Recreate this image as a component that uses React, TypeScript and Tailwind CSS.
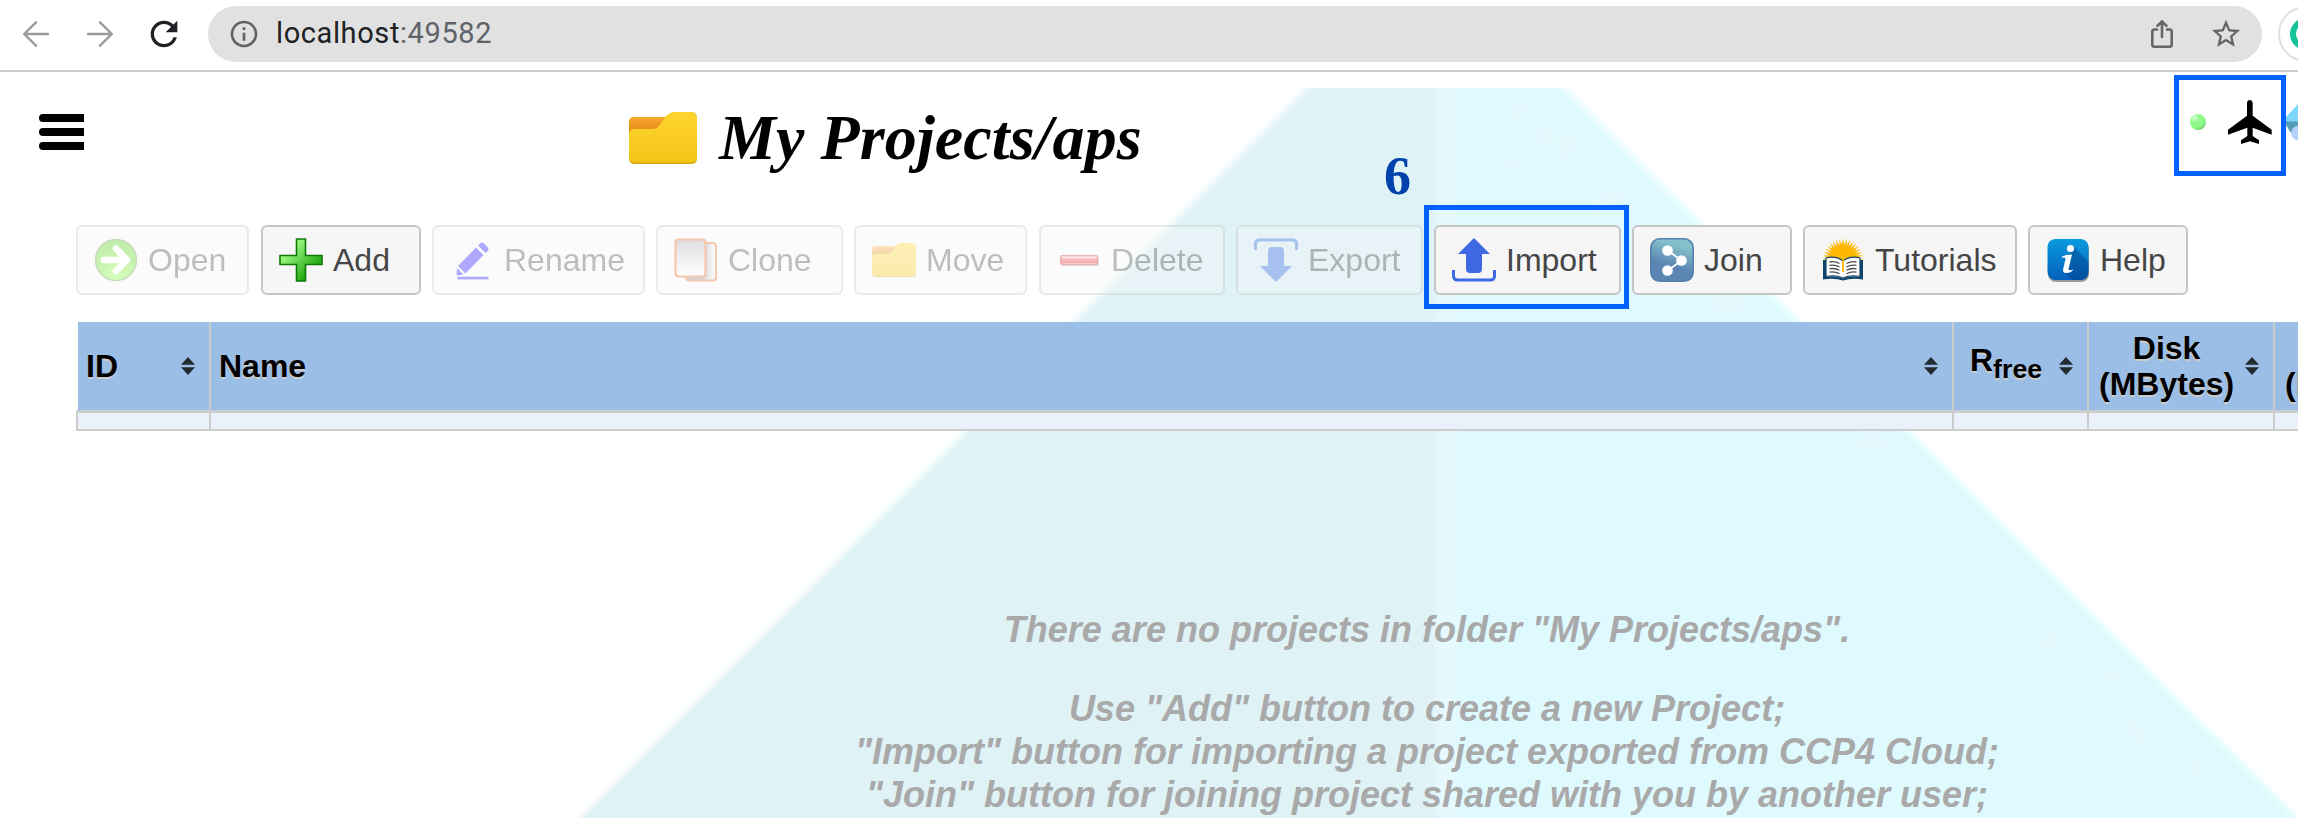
import type { ReactNode } from "react";
import { MdInfoOutline, MdRefresh, MdStarBorder } from "react-icons/md";

const FolderIcon = ({ className }: { className: string }) => (
  <svg viewBox="0 0 68 52" preserveAspectRatio="none" className={className}>
    <defs>
      <linearGradient id="folderFront" x1="0" y1="0" x2="0" y2="1">
        <stop offset="0" stopColor="#ffd42f" />
        <stop offset="1" stopColor="#f2c618" />
      </linearGradient>
      <linearGradient id="folderBack" x1="0" y1="0" x2="0" y2="1">
        <stop offset="0" stopColor="#f9a92c" />
        <stop offset="0.4" stopColor="#e8931c" />
      </linearGradient>
    </defs>
    <path d="M0 10Q0 5 5 5H45V30H0Z" fill="url(#folderBack)" />
    <path d="M0 23Q0 17 5 17H24C34 17 33 0 47 0H62Q68 0 68 6V46Q68 52 62 52H6Q0 52 0 46Z" fill="#d3a90f" />
    <path d="M0 23Q0 17 5 17H24C34 17 33 0 47 0H62Q68 0 68 6V45Q68 50.5 62 50.5H6Q0 50.5 0 45Z" fill="url(#folderFront)" />
  </svg>
);

const Icon = ({ children }: { children: ReactNode }) => (
  <svg viewBox="0 0 44 44" className="h-11 w-11 shrink-0">
    {children}
  </svg>
);

const OpenIcon = () => (
  <Icon>
    <defs>
      <radialGradient id="openFill" cx="0.5" cy="0.9" r="0.9">
        <stop offset="0" stopColor="#8cff3c" />
        <stop offset="1" stopColor="#4cc40c" />
      </radialGradient>
    </defs>
    <circle cx="22" cy="22" r="20.5" fill="url(#openFill)" stroke="#5f9a4a" strokeWidth="1.5" />
    <path d="M10 22H32M22 10.500L33 22L22 33" fill="none" stroke="#fff" strokeWidth="6.500" strokeLinecap="round" strokeLinejoin="round" />
  </Icon>
);

const AddIcon = () => (
  <Icon>
    <defs>
      <linearGradient id="addFill" x1="0" y1="0" x2="1" y2="1">
        <stop offset="0.2" stopColor="#a4ff8c" />
        <stop offset="0.8" stopColor="#1ba30a" />
      </linearGradient>
    </defs>
    <path d="M17.500 1H26.500V17.500H43V26.500H26.500V43H17.500V26.500H1V17.500H17.500Z" fill="url(#addFill)" stroke="#0c7a05" strokeWidth="1.600" />
  </Icon>
);

const RenameIcon = () => (
  <Icon>
    <g fill="#1d08ff">
      <path d="M8 28L26 9.500L33.500 17L15.500 35.500Z" />
      <path d="M28 7.500L30.500 5Q32 4 33.500 5L38 9.500Q39 11 38 12.500L35.500 15Z" />
      <path d="M7 30L13.500 36.500L7.500 37.500Q6.500 37.500 6.600 36Z" />
      <rect x="7.500" y="38.700" width="31" height="2.700" />
    </g>
  </Icon>
);

const CloneIcon = () => (
  <Icon>
    <defs>
      <linearGradient id="cloneFill" x1="0" y1="0" x2="0" y2="1">
        <stop offset="0" stopColor="#a8a0ac" />
        <stop offset="1" stopColor="#ffffff" />
      </linearGradient>
      <linearGradient id="cloneShade" x1="0" y1="0" x2="1" y2="0">
        <stop offset="0.55" stopColor="#8d8790" />
        <stop offset="1" stopColor="#ffffff" />
      </linearGradient>
    </defs>
    <rect x="12" y="5" width="30" height="37.500" rx="3" fill="url(#cloneShade)" stroke="#e8601c" strokeWidth="2" />
    <rect x="1.500" y="1.500" width="30" height="37" rx="3" fill="url(#cloneFill)" stroke="#e8601c" strokeWidth="2.200" />
  </Icon>
);

const MoveIcon = () => (
  <span className="flex h-11 w-11 shrink-0 items-center">
    <FolderIcon className="h-[34px] w-11" />
  </span>
);

const DeleteIcon = () => (
  <Icon>
    <defs>
      <linearGradient id="deleteFill" x1="0" y1="0" x2="0" y2="1">
        <stop offset="0" stopColor="#ff8f8f" />
        <stop offset="0.5" stopColor="#e83838" />
        <stop offset="1" stopColor="#d80000" />
      </linearGradient>
    </defs>
    <rect x="4" y="19" width="38" height="9" rx="1" fill="#999" />
    <rect x="3.500" y="17.500" width="37" height="9" rx="1" fill="url(#deleteFill)" stroke="#c23030" strokeWidth="1" />
    <path d="M5 19.500H39" stroke="#ffc4c4" strokeWidth="1.500" />
    <path d="M5 25.500H39" stroke="#ff6b6b" strokeWidth="1" />
  </Icon>
);

const TransferShape = () => (
  <g>
    <path d="M22 0L38 16H30V31Q30 35 26 35H18Q14 35 14 31V16H6Z" fill="#3f68e4" />
    <path d="M1.500 32V38Q1.500 42 6 42H38Q42.500 42 42.500 38V32" fill="none" stroke="#3f68e4" strokeWidth="3" />
  </g>
);

const ExportIcon = () => (
  <Icon>
    <g transform="rotate(180 22 22)">
      <TransferShape />
    </g>
  </Icon>
);

const ImportIcon = () => (
  <Icon>
    <TransferShape />
  </Icon>
);

const JoinIcon = () => (
  <Icon>
    <defs>
      <linearGradient id="joinFill" x1="0.7" y1="0" x2="0.4" y2="1">
        <stop offset="0.15" stopColor="#84c1cb" />
        <stop offset="0.65" stopColor="#5b86b3" />
      </linearGradient>
    </defs>
    <rect x="0.800" y="0.800" width="42.400" height="42.400" rx="9" fill="url(#joinFill)" stroke="#5580ae" strokeWidth="1.600" />
    <path d="M18 12.500L31.500 22.500L18 32.500" fill="none" stroke="#fff" strokeWidth="1.800" />
    <circle cx="17.500" cy="12.500" r="5.300" fill="#fff" />
    <circle cx="31.500" cy="22.500" r="5.300" fill="#fff" />
    <circle cx="17.500" cy="32.500" r="5.300" fill="#fff" />
  </Icon>
);

const rays = Array.from({ length: 21 }, (_, i) => {
  const a = (-190 + i * 10) * (Math.PI / 180);
  const p = (r: number, d: number) => `${22 + r * Math.cos(a + d)},${21 + r * Math.sin(a + d)}`;
  return `${p(14, -0.09)} ${p(20.5, 0)} ${p(14, 0.09)}`;
});

const TutorialsIcon = () => (
  <Icon>
    <circle cx="22" cy="21" r="14.500" fill="#fdb802" />
    {rays.map((r) => (
      <polygon key={r} points={r} fill="#fdb802" />
    ))}
    <path d="M2 22H5V39Q14 37 22 40.500Q30 37 39 39V22H42V41.500Q31 39.500 22 42.500Q13 39.500 2 41.500Z" fill="#12456c" />
    <path d="M5 20Q15 17.500 22 23Q29 17.500 39 20V38.500Q29 36.500 22 40Q15 36.500 5 38.500Z" fill="#fff" stroke="#12456c" strokeWidth="1.200" />
    <path d="M8.500 24Q14 23 18.500 25.500M8.500 27.400Q14 26.400 18.500 29M8.500 30.800Q14 29.800 18.500 32.300M8.500 34.200Q14 33.200 18.500 35.700M35.500 24Q30 23 25.500 25.500M35.500 27.400Q30 26.400 25.500 29M35.500 30.800Q30 29.800 25.500 32.300M35.500 34.200Q30 33.200 25.500 35.700" fill="none" stroke="#4b4b4b" strokeWidth="1.300" />
    <path d="M22 22V34" stroke="#fdb802" strokeWidth="1.800" />
  </Icon>
);

const HelpIcon = () => (
  <Icon>
    <defs>
      <linearGradient id="helpFill" x1="0" y1="0" x2="0" y2="1">
        <stop offset="0" stopColor="#0a9ade" />
        <stop offset="1" stopColor="#0560bd" />
      </linearGradient>
    </defs>
    <rect x="2" y="3" width="41" height="41" rx="8" fill="#9a9a9a" />
    <rect x="1.500" y="1" width="41" height="41" rx="8" fill="url(#helpFill)" />
    <path d="M27 8L42.500 24V34Q42.500 42 34.500 42H26L19 35L25 14Z" fill="#053f86" fillOpacity="0.450" />
    <circle cx="24.500" cy="10.500" r="3.600" fill="#fff" />
    <path d="M16 18.500Q20 16.500 26 16.500L22.500 31Q22.500 33 27.500 31.500Q25 35 20 35Q16.500 35 17.200 31L19.600 20.500Q19 19 16 19.800Z" fill="#fff" />
  </Icon>
);

type Tool = { label: string; icon: ReactNode; width: string; disabled?: boolean };

const tools: Tool[] = [
  { label: "Open", icon: <OpenIcon />, width: "w-[173px]", disabled: true },
  { label: "Add", icon: <AddIcon />, width: "w-40 ml-px", disabled: false },
  { label: "Rename", icon: <RenameIcon />, width: "w-[213px]", disabled: true },
  { label: "Clone", icon: <CloneIcon />, width: "w-[187px]", disabled: true },
  { label: "Move", icon: <MoveIcon />, width: "w-[173px]", disabled: true },
  { label: "Delete", icon: <DeleteIcon />, width: "w-[186px] ml-px", disabled: true },
  { label: "Export", icon: <ExportIcon />, width: "w-[187px]", disabled: true },
  { label: "Import", icon: <ImportIcon />, width: "w-[187px]" },
  { label: "Join", icon: <JoinIcon />, width: "w-40" },
  { label: "Tutorials", icon: <TutorialsIcon />, width: "w-[214px]" },
  { label: "Help", icon: <HelpIcon />, width: "w-40" },
];

const ToolButton = ({ label, icon, width, disabled }: Tool) => (
  <button
    className={`flex h-[70px] shrink-0 items-center gap-[10px] rounded-md border-2 border-[#c5c5c5] bg-[#f6f6f6] pl-4 text-[32px] leading-none text-[#454545] ${width} ${disabled ? "opacity-35" : ""}`}
  >
    {icon}
    <span className="pb-px">{label}</span>
  </button>
);

const SortIcon = () => (
  <svg viewBox="0 0 14 18" className="h-[18px] w-[14px] shrink-0" fill="#222b30">
    <path d="M7 0L14 7.700H0ZM7 18L14 10.300H0Z" />
  </svg>
);

const Pyramid = () => (
  <svg viewBox="0 0 2298 730" className="absolute left-0 top-4 h-[730px] w-[2298px]">
    <defs>
      <filter id="soft" x="-5%" y="-5%" width="110%" height="110%">
        <feGaussianBlur stdDeviation="3" />
      </filter>
      <clipPath id="frame">
        <rect width="2298" height="730" />
      </clipPath>
    </defs>
    <g clipPath="url(#frame)">
      <g filter="url(#soft)">
        <path d="M1327 -20H1440V760H551Z" fill="#dff2f6" />
        <path d="M1440 -20H1545L2328 760H1440Z" fill="#dffaff" />
        <path d="M1436 -20H1456V760H1436Z" fill="#e6f9ff" />
        <g fill="#e5f9ff">
          <ellipse cx="1518" cy="24" rx="13" ry="6" transform="rotate(-45 1518 24)" />
          <ellipse cx="1546" cy="48" rx="12" ry="7" />
          <ellipse cx="1566" cy="58" rx="9" ry="13" transform="rotate(30 1566 58)" />
          <ellipse cx="1513" cy="77" rx="9" ry="6" />
          <ellipse cx="1608" cy="112" rx="18" ry="8" transform="rotate(-35 1608 112)" />
          <ellipse cx="1728" cy="214" rx="22" ry="9" />
          <ellipse cx="1870" cy="354" rx="18" ry="8" />
          <ellipse cx="2050" cy="552" rx="8" ry="14" transform="rotate(30 2050 552)" />
          <ellipse cx="2112" cy="588" rx="12" ry="8" />
          <ellipse cx="2138" cy="645" rx="7" ry="18" transform="rotate(-30 2138 645)" />
          <ellipse cx="2196" cy="680" rx="7" ry="15" transform="rotate(-30 2196 680)" />
        </g>
      </g>
    </g>
  </svg>
);

export default function App() {
  return (
    <div className="relative flex h-[818px] w-[2298px] flex-col overflow-hidden bg-white font-['Liberation_Sans',Arial,sans-serif]">
      <header className="flex h-[72px] shrink-0 items-start border-b-2 border-[#cbcbcb] bg-white pt-[6px]">
        <div className="flex h-14 w-[208px] shrink-0 items-center">
          <svg viewBox="0 0 26 26" className="ml-[23px] h-[26px] w-[26px]" fill="none" stroke="#9b9b9b" strokeWidth="2.400" strokeLinecap="round">
            <path d="M25 13H1.500M13 1.300L1.300 13L13 24.700" />
          </svg>
          <svg viewBox="0 0 26 26" className="ml-[38px] h-[26px] w-[26px]" fill="none" stroke="#9b9b9b" strokeWidth="2.400" strokeLinecap="round">
            <path d="M1 13H24.500M13 1.300L24.700 13L13 24.700" />
          </svg>
          <MdRefresh className="ml-[31px] h-[40px] w-[40px] text-[#202124]" />
        </div>
        <div className="flex h-14 w-[2054px] shrink-0 items-center rounded-full bg-[#e1e1e1] pl-5">
          <MdInfoOutline className="h-8 w-8 text-[#5f6368]" />
          <span className="ml-4 font-['Roboto',sans-serif] text-[29px] tracking-[0.6px] text-[#202124]">
            localhost<span className="text-[#5f6368]">:49582</span>
          </span>
          <svg viewBox="0 0 22 28" className="ml-auto h-7 w-[22px]" fill="none" stroke="#636568" strokeWidth="2.600" strokeLinecap="round" strokeLinejoin="round">
            <path d="M6 9.500H3.500Q1.300 9.500 1.300 11.700V24.500Q1.300 26.700 3.500 26.700H18.500Q20.700 26.700 20.700 24.500V11.700Q20.700 9.500 18.500 9.500H16M11 17V1.500M6.500 5.800L11 1.300L15.500 5.800" />
          </svg>
          <MdStarBorder className="ml-[36px] mr-[19px] h-[34px] w-[34px] text-[#636568]" />
        </div>
        <svg viewBox="0 0 20 56" className="ml-4 h-14 w-5 shrink-0">
          <circle cx="28" cy="28" r="27" fill="#fff" stroke="#dfdfdf" strokeWidth="2" />
          <circle cx="28" cy="28" r="16" fill="#15c39a" />
          <circle cx="28" cy="28" r="8.500" fill="none" stroke="#fff" strokeWidth="3" />
        </svg>
      </header>

      <main className="relative flex h-[746px] flex-col">
        <Pyramid />
        <div className="relative flex h-[153px] shrink-0 items-start">
          <svg viewBox="0 0 45 36" className="ml-[39px] mt-[42px] h-9 w-[45px]">
            <path d="M4 0H45V8H4A4 4 0 0 1 4 0ZM4 14H45V22H4A4 4 0 0 1 4 14ZM4 28H45V36H4A4 4 0 0 1 4 28Z" fill="#000" />
          </svg>
          <FolderIcon className="ml-[545px] mt-10 h-[52px] w-[68px]" />
          <h1 className="ml-[22px] mt-[30px] whitespace-nowrap font-['Liberation_Serif','Times_New_Roman',serif] text-[64px] font-bold italic leading-[72px] tracking-[0.1px] text-black">
            My Projects/aps
          </h1>
          <div className="ml-auto mt-[3px] flex h-[101px] w-[124px] shrink-0">
            <div className="flex h-[101px] w-28 items-start border-[5px] border-[#0061ff] bg-white pt-5 pl-[11px]">
              <svg viewBox="0 0 16 16" className="mt-[14px] h-4 w-4">
                <defs>
                  <radialGradient id="dot" cx="0.3" cy="0.25" r="0.8">
                    <stop offset="0" stopColor="#e0ffd8" />
                    <stop offset="0.35" stopColor="#90fb8c" />
                    <stop offset="0.8" stopColor="#8cf884" />
                    <stop offset="1" stopColor="#74c870" />
                  </radialGradient>
                </defs>
                <circle cx="8" cy="8" r="8" fill="url(#dot)" />
              </svg>
              <svg viewBox="564 300 132 132" className="ml-[22px] h-11 w-11" fill="#000">
                <path d="M621 308Q622 300 630 300Q637 300 638 308V347L695 389V404L638 383V408L657 421V432L630 424L603 432V421L622 408V383L564 404V389L621 347Z" />
              </svg>
            </div>
            <svg viewBox="0 0 12 44" className="mt-[24px] h-11 w-3">
              <path d="M0 18L12 5V23H0Z" fill="#7fd8fb" />
              <path d="M0 22.500H12V34H5L0 26Z" fill="#559db5" />
              <circle cx="12.500" cy="34" r="7.300" fill="#b4d2fb" />
            </svg>
          </div>
        </div>

        <div className="relative flex h-[97px] shrink-0 items-start gap-[11px] pl-[76px]">
          {tools.map((t) => (
            <ToolButton key={t.label} {...t} />
          ))}
        </div>

        <div className="relative ml-[76px] w-[2322px] shrink-0 text-[32px] font-bold text-black">
          <div className="flex h-[88px] pl-[2px] leading-9 [text-shadow:0_2px_0_#ccc]">
            <div className="flex w-[133px] items-center justify-between border-r-2 border-[#ccc] bg-[#9abee6] pr-[14px] pl-2">
              ID
              <SortIcon />
            </div>
            <div className="flex w-[1743px] items-center justify-between border-r-2 border-[#ccc] bg-[#9abee6] pr-[14px] pl-2">
              Name
              <SortIcon />
            </div>
            <div className="flex w-[135px] items-center justify-between border-r-2 border-[#ccc] bg-[#9abee6] pr-[14px] pl-4">
              <span className="-mt-3">
                R<sub className="text-[26.700px]">free</sub>
              </span>
              <SortIcon />
            </div>
            <div className="flex w-[186px] items-center justify-between border-r-2 border-[#ccc] bg-[#9abee6] pr-[14px] pl-[10px]">
              <span className="text-center">
                Disk
                <br />
                (MBytes)
              </span>
              <SortIcon />
            </div>
            <div className="flex w-[123px] items-center bg-[#9abee6] pl-[10px]">
              <span className="text-center">
                CPU
                <br />
                (hours)
              </span>
            </div>
          </div>
          <div className="flex h-[21px] border-t-[3px] border-b-2 border-l-2 border-[#ccc] bg-[#eaf1fa]">
            <div className="w-[133px] border-r-2 border-[#ccc]" />
            <div className="w-[1743px] border-r-2 border-[#ccc]" />
            <div className="w-[135px] border-r-2 border-[#ccc]" />
            <div className="w-[186px] border-r-2 border-[#ccc]" />
          </div>
        </div>

        <div className="relative mt-[177px] ml-[76px] w-[2702px] shrink-0 whitespace-nowrap text-center text-[36px] font-bold italic leading-[43px] text-[#a9a9a9]">
          <p>There are no projects in folder "My Projects/aps".</p>
          <p className="mt-9">Use "Add" button to create a new Project;</p>
          <p>"Import" button for importing a project exported from CCP4 Cloud;</p>
          <p>"Join" button for joining project shared with you by another user;</p>
        </div>
      </main>

      <div className="absolute left-[1424px] top-[205px] h-[104px] w-[205px] border-[5px] border-[#0061ff]" />
      <div className="absolute left-[1384px] top-[146px] font-['Liberation_Serif','Times_New_Roman',serif] text-[54px] font-bold leading-[60px] text-[#0042ab]">
        6
      </div>
    </div>
  );
}
